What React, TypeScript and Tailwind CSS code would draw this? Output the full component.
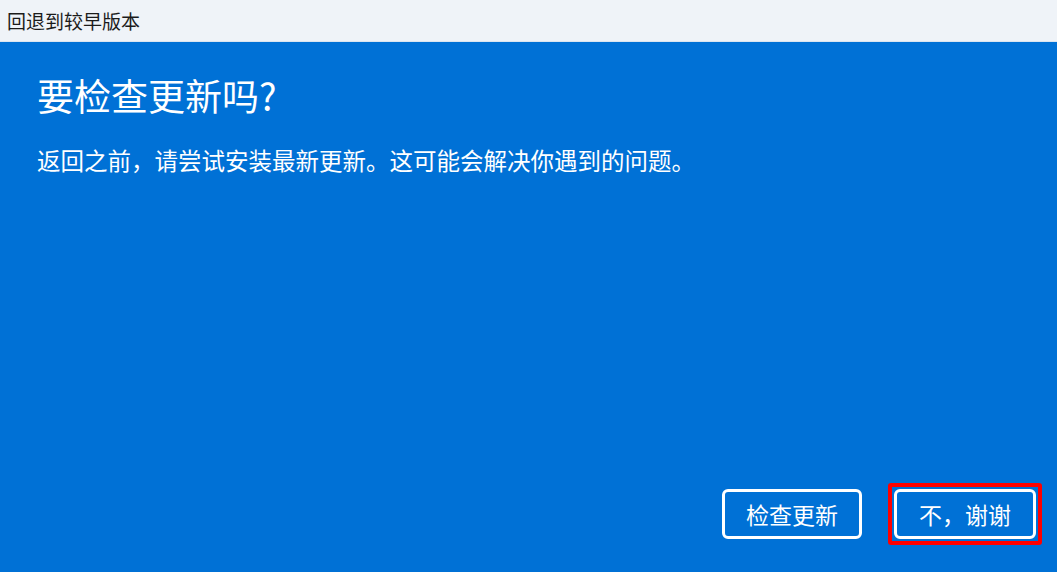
const font = { fontFamily: '"Noto Sans CJK SC", "Noto Sans", sans-serif' };

export default function App() {
  return (
    <div className="flex h-[572px] w-[1057px] flex-col overflow-hidden bg-[#0071d6]" style={font}>
      <div className="flex h-[42px] items-center border-b border-[#dbe5f0] bg-[#eff3f8] pl-[7px]">
        <span className="text-[19px] leading-none text-[#1b1b1b]">回退到较早版本</span>
      </div>

      <div className="flex flex-1 flex-col px-[37px] pt-[35px] text-white">
        <h1 className="text-[37px] leading-none font-normal">要检查更新吗?</h1>
        <p className="mt-[35px] text-[23.5px] leading-none">
          返回之前，请尝试安装最新更新。这可能会解决你遇到的问题。
        </p>
      </div>

      <div className="flex items-center justify-end gap-[26px] pr-[15px] pb-[27px]">
        <button
          type="button"
          className="h-[50px] w-[140px] rounded-md border-[3px] border-white bg-[#0071d6] text-[23px] leading-none text-white">
          检查更新
        </button>
        <div className="rounded-[3px] border-4 border-[#ff0000] p-[2px]">
          <button
            type="button"
            className="block h-[50px] w-[142px] rounded-md border-[3px] border-white bg-[#0071d6] text-[23px] leading-none text-white">
            不，谢谢
          </button>
        </div>
      </div>
    </div>
  );
}
